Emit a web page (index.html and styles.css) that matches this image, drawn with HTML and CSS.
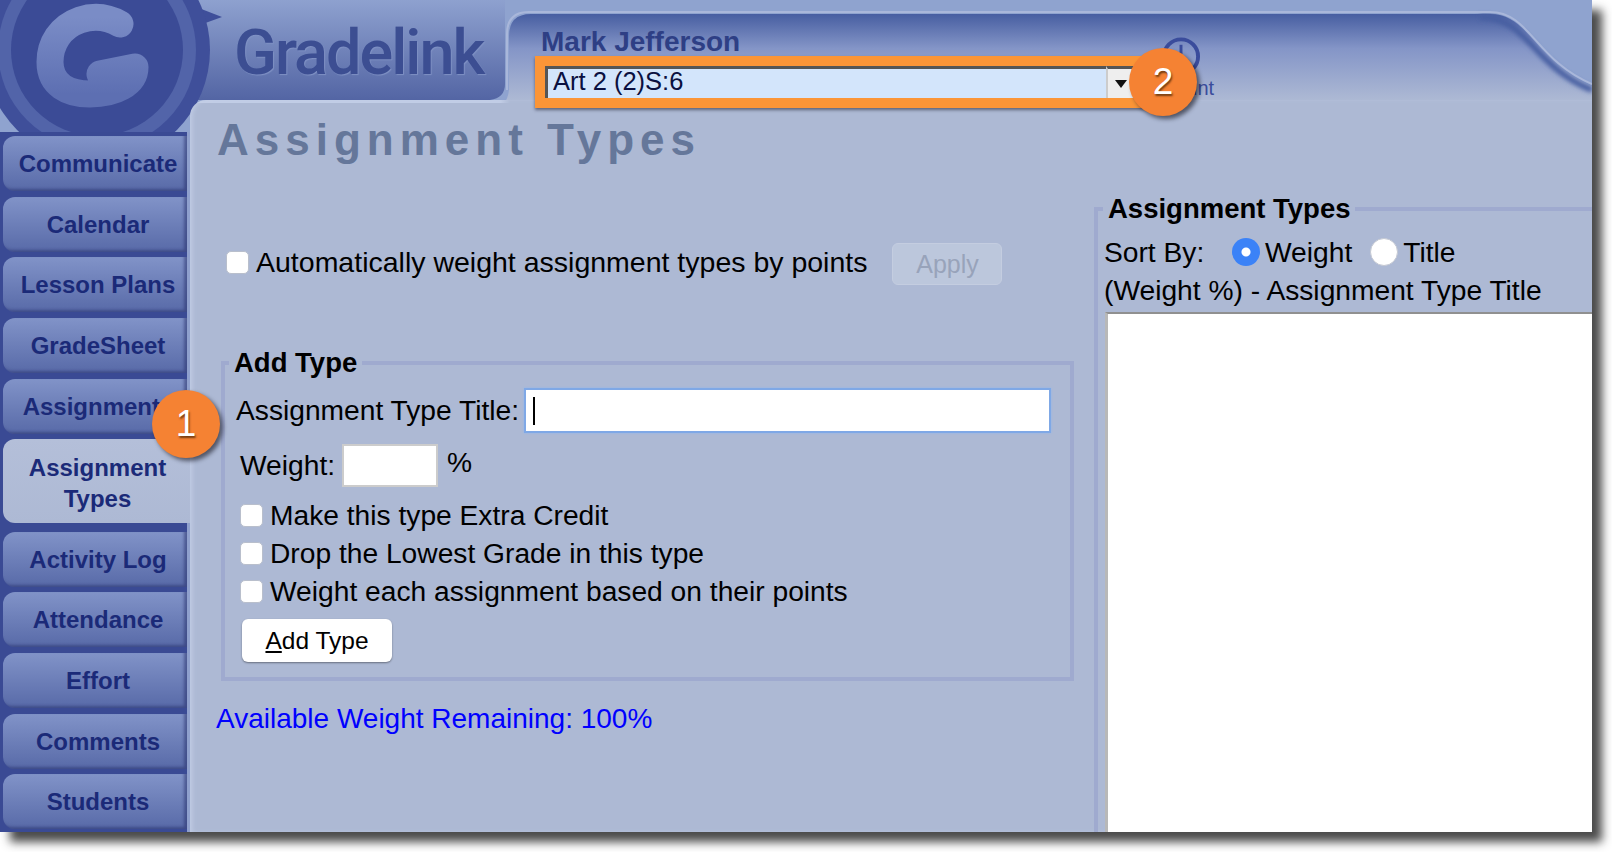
FILE: index.html
```html
<!DOCTYPE html>
<html lang="en">
<head>
  <meta charset="UTF-8">
  <title>Gradelink - Assignment Types</title>
  <link rel="stylesheet" href="styles.css">
</head>
<body>

  <div class="window">
    <svg class="header-art" width="1592" height="140" viewBox="0 0 1592 140">
      <defs>
        <linearGradient id="brandTab" x1="0" y1="0" x2="0" y2="1">
          <stop offset="0" stop-color="#8ea1cf"/>
          <stop offset="1" stop-color="#5365a4"/>
        </linearGradient>
        <linearGradient id="userTab" gradientUnits="userSpaceOnUse" x1="0" y1="14" x2="0" y2="100">
          <stop offset="0" stop-color="#475ea1"/>
          <stop offset="0.4" stop-color="#8495c7"/>
          <stop offset="1" stop-color="#adb9d4"/>
        </linearGradient>
        <linearGradient id="letterG" x1="0" y1="0" x2="0" y2="1">
          <stop offset="0" stop-color="#7a8cc6"/>
          <stop offset="1" stop-color="#5d6fb2"/>
        </linearGradient>
        <filter id="softEdge"><feGaussianBlur stdDeviation="2"/></filter>
      </defs>
      <rect width="1592" height="140" fill="#8fa3cf"/>
      <path d="M190 0H505V84Q505 98 490 100H190Z" fill="url(#brandTab)"/>
      <path d="M490 112Q507 108 509 90V36Q509 14 531 14H1490C1530 14 1535 62 1592 86V140H490Z" fill="url(#userTab)"/>
      <path d="M1480 17C1528 17 1532 66 1592 90" fill="none" stroke="#475ea1" stroke-width="6" filter="url(#softEdge)"/>
      <path d="M507 90V34Q507 12 529 12H1490C1530 12 1535 60 1592 84" fill="none" stroke="#a9b7da" stroke-width="2"/>
      <!-- logo -->
      <path d="M178 0L222 17L186 30Z" fill="#3f4f9a"/>
      <circle cx="97" cy="50" r="113" fill="#3f4f9a"/>
      <circle cx="97" cy="50" r="99" fill="#5264a9"/>
      <circle cx="97" cy="50" r="86" fill="#3b4b96"/>
      <path d="M120 24C106 16 92 16 80 20C60 27 50 44 50 62C50 85 68 94 90 94C115 94 135 84 135 67L100 74" fill="none" stroke="url(#letterG)" stroke-width="27" stroke-linecap="round" stroke-linejoin="round"/>
    </svg>

    <header class="top-bar">
      <div class="wordmark">Gradelink</div>
      <div class="user-box">
        <div class="user-name">Mark Jefferson</div>
        <div class="course-highlight">
          <select class="course-select">
            <option>Art 2 (2)S:6</option>
          </select>
          <div class="select-arrow"><span class="arrow-down"></span></div>
        </div>
      </div>
      <div class="account-link">
        <svg width="42" height="42" viewBox="0 0 42 42">
          <circle cx="21" cy="21" r="17.5" fill="none" stroke="#3a4c9c" stroke-width="4"/>
          <path d="M21 9V21" stroke="#3a4c9c" stroke-width="3"/>
        </svg>
        <span>Account</span>
      </div>
    </header>

    <div class="content">
      <nav class="sidebar">
        <a class="nav-item">Communicate</a>
        <a class="nav-item">Calendar</a>
        <a class="nav-item">Lesson Plans</a>
        <a class="nav-item">GradeSheet</a>
        <a class="nav-item">Assignments</a>
        <a class="nav-item active">Assignment Types</a>
        <a class="nav-item">Activity Log</a>
        <a class="nav-item">Attendance</a>
        <a class="nav-item">Effort</a>
        <a class="nav-item">Comments</a>
        <a class="nav-item">Students</a>
      </nav>

      <main class="panel">
        <h1>Assignment Types</h1>

        <div class="columns">
          <div class="left-col">
            <div class="auto-row">
              <input type="checkbox" id="autoWeight">
              <label for="autoWeight">Automatically weight assignment types by points</label>
              <button type="button" class="apply-btn" disabled>Apply</button>
            </div>

            <fieldset class="add-type">
              <legend>Add Type</legend>
              <div class="title-row">
                <label for="typeTitle">Assignment Type Title:</label>
                <div class="title-input">
                  <span class="caret"></span>
                  <input type="text" id="typeTitle">
                </div>
              </div>
              <div class="weight-row">
                <label for="typeWeight">Weight:</label>
                <input type="text" id="typeWeight">
                <span class="percent">%</span>
              </div>
              <div class="check-row">
                <input type="checkbox" id="extraCredit">
                <label for="extraCredit">Make this type Extra Credit</label>
              </div>
              <div class="check-row">
                <input type="checkbox" id="dropLowest">
                <label for="dropLowest">Drop the Lowest Grade in this type</label>
              </div>
              <div class="check-row">
                <input type="checkbox" id="byPoints">
                <label for="byPoints">Weight each assignment based on their points</label>
              </div>
              <button type="button" class="add-btn"><u>A</u>dd Type</button>
            </fieldset>

            <p class="remaining">Available Weight Remaining: 100%</p>
          </div>

          <fieldset class="type-list">
            <legend>Assignment Types</legend>
            <div class="sort-row">
              <span class="sort-label">Sort By:</span>
              <input type="radio" name="sortBy" id="sortWeight" checked>
              <label for="sortWeight">Weight</label>
              <input type="radio" name="sortBy" id="sortTitle">
              <label for="sortTitle">Title</label>
            </div>
            <div class="list-caption">(Weight %) - Assignment Type Title</div>
            <div class="list-box"></div>
          </fieldset>
        </div>
      </main>
    </div>

    <div class="badge badge-one">1</div>
    <div class="badge badge-two">2</div>
  </div>

</body>
</html>
```

FILE: styles.css
```css
html, body {
  margin: 0;
  height: 100%;
  overflow: hidden;
  background-color: white;
}

body {
  font-family: "Liberation Sans", Arial, sans-serif;
  color: black;
}

.window {
  position: relative;
  width: 1592px;
  height: 832px;
  overflow: visible;
  box-shadow: 10px 10px 9px rgba(30, 30, 30, 0.8);
}

.header-art {
  position: absolute;
  left: 0;
  top: 0;
}

/* top bar */
.top-bar {
  position: relative;
  z-index: 2;
  display: flex;
  height: 100px;
}

.wordmark {
  width: 301px;
  padding: 13px 0 0 234px;
  box-sizing: content-box;
  font-family: Roboto, sans-serif;
  font-size: 63px;
  font-weight: 500;
  letter-spacing: -2px;
  line-height: 80px;
  color: #3c4e92;
  text-shadow: 1px 1px 1px #7f91c4;
}

.user-box {
  width: 615px;
  padding-top: 27px;
}

.user-name {
  padding-left: 6px;
  height: 29px;
  font-size: 28px;
  font-weight: bold;
  line-height: 30px;
  color: #2e3f85;
}

.course-highlight {
  display: flex;
  height: 32px;
  border: 10px solid #fb9537;
  box-shadow: 0 2px 3px rgba(40, 40, 60, 0.6);
}

.course-select {
  appearance: none;
  flex: 1;
  min-width: 0;
  margin: 0;
  padding: 0 0 3px 8px;
  border: none;
  border-radius: 0;
  background-color: #d3e5fb;
  box-shadow: inset 3px 3px 0 #555;
  font-family: inherit;
  font-size: 25.5px;
  color: #0a1040;
}

.select-arrow {
  display: flex;
  box-sizing: border-box;
  width: 34px;
  padding-left: 7px;
  align-items: center;
  background-color: #eee;
  border-top: 3px solid #555;
  border-left: 2px solid #ccc;
}

.arrow-down {
  width: 0;
  height: 0;
  border-left: 6px solid transparent;
  border-right: 6px solid transparent;
  border-top: 8px solid #111;
}

.account-link {
  display: flex;
  flex-direction: column;
  align-items: center;
  width: 64px;
  margin-left: -4px;
  padding-top: 36px;
  font-size: 20px;
  line-height: 23px;
  color: #3a4c9c;
}

.account-link svg {
  display: block;
  margin-left: 5px;
}

/* sidebar + panel */
.content {
  position: relative;
  z-index: 1;
  display: flex;
  height: 732px;
}

.sidebar {
  box-sizing: border-box;
  width: 190px;
  height: 700px;
  margin-top: 32px;
  padding: 4px 0 0 3px;
  display: flex;
  flex-direction: column;
  gap: 5.7px;
  background-color: #3a4a94;
  border-right: 3px solid #8fa0cd;
}

.nav-item {
  display: flex;
  align-items: center;
  justify-content: center;
  box-sizing: border-box;
  height: 55px;
  padding: 0 0 0 6px;
  text-align: center;
  font-size: 24px;
  font-weight: bold;
  line-height: 31px;
  color: #1b2a78;
  border-radius: 12px 0 0 12px;
  background: linear-gradient(#8193c8, #586aa8);
  box-shadow: inset -3px -2px 3px rgba(40, 50, 110, 0.55);
}

.nav-item.active {
  height: 83.5px;
  margin-right: -3px;
  margin-bottom: 3px;
  background: linear-gradient(#b4bfd9, #adb9d4);
  box-shadow: none;
  padding: 3px 20px 0 22px;
}

.panel {
  flex: 1;
  min-width: 0;
  background: linear-gradient(to right, #c2cde6 310px, transparent 320px) top / 100% 3px no-repeat, #adb9d4;
  border-top-left-radius: 16px;
  box-shadow: inset 4px 0 5px -2px #c2cde6;
  overflow: hidden;
}

.panel h1 {
  margin: 14px 0 0 27px;
  height: 52px;
  font-size: 44px;
  font-weight: bold;
  letter-spacing: 6px;
  line-height: 52px;
  color: #65779a;
}

.columns {
  display: flex;
  height: 666px;
}

.left-col {
  width: 904px;
  flex: none;
}

.auto-row {
  display: flex;
  align-items: center;
  height: 42px;
  margin: 77px 0 0 36px;
  font-size: 28.5px;
}

.auto-row label {
  margin-left: 7px;
}

.auto-row input,
.auto-row label {
  margin-bottom: 4px;
}

input[type="checkbox"] {
  appearance: none;
  flex: none;
  box-sizing: border-box;
  width: 23px;
  height: 23px;
  background-color: white;
  border: 1px solid #b9bfcc;
  border-radius: 5px;
  margin-top: 0;
  margin-left: 0;
  margin-right: 0;
}

.apply-btn {
  width: 110px;
  height: 42px;
  margin-left: 25px;
  padding: 0;
  border: 1px solid #c4cde0;
  border-radius: 6px;
  background-color: #bcc7dc;
  font-family: inherit;
  font-size: 25px;
  color: #98a3ba;
}

.add-type {
  box-sizing: border-box;
  width: 853px;
  height: 333px;
  margin: 63px 0 0 31px;
  padding: 10px 0 0 11px;
  border: 4px solid #9faacf;
  font-size: 28.2px;
  min-width: 0;
}

.add-type legend {
  margin-left: -7px;
  padding: 0 5px;
  font-weight: bold;
  font-size: 27.5px;
  line-height: 30px;
}

.title-row {
  display: flex;
  align-items: center;
  height: 45px;
}

.title-input {
  display: flex;
  align-items: center;
  box-sizing: border-box;
  width: 527px;
  height: 45px;
  margin-left: 5px;
  padding-left: 7px;
  background-color: white;
  border: 2px solid #7fa8e6;
  box-shadow: 0 0 2px #8fb8f0;
}

.caret {
  flex: none;
  width: 2px;
  height: 28px;
  background-color: black;
}

.title-input input {
  flex: 1;
  min-width: 0;
  border: none;
  background: none;
  padding: 0;
  outline: none;
}

.weight-row {
  display: flex;
  align-items: center;
  height: 43px;
  margin: 11px 0 9px 4px;
}

#typeWeight {
  box-sizing: border-box;
  width: 96px;
  height: 43px;
  margin: 0 0 0 7px;
  background-color: white;
  border: 2px solid #ccc;
}

.percent {
  margin: -6px 0 0 9px;
}

.check-row {
  display: flex;
  align-items: center;
  gap: 7px;
  height: 38px;
  margin-left: 4px;
}

.check-row input {
  margin-bottom: 0;
}

.add-btn {
  display: block;
  box-sizing: border-box;
  width: 150px;
  height: 43px;
  margin: 9px 0 0 6px;
  padding: 0;
  border: none;
  border-radius: 6px;
  background-color: white;
  box-shadow: 0 1px 2px rgba(0, 0, 0, 0.4);
  font-family: inherit;
  font-size: 24.5px;
  color: black;
}

.remaining {
  margin: 21px 0 0 26px;
  font-size: 28px;
  line-height: 34px;
  color: #0000ff;
}

.type-list {
  flex: 1;
  min-width: 0;
  box-sizing: border-box;
  margin: 28px 0 0 0;
  padding: 0 0 0 6px;
  border: none;
  border-top: 4px solid #9faacf;
  border-left: 4px solid #9faacf;
  display: flex;
  flex-direction: column;
  font-size: 28.2px;
}

.type-list legend {
  margin-left: -1px;
  padding: 0 5px;
  font-size: 27.5px;
  font-weight: bold;
  line-height: 30px;
}

.sort-row {
  display: flex;
  align-items: center;
  height: 38px;
  margin-top: 9px;
}

.sort-label {
  width: 128px;
}

input[type="radio"] {
  appearance: none;
  flex: none;
  box-sizing: border-box;
  width: 28px;
  height: 28px;
  margin: 0;
  background-color: white;
  border: 1px solid #c4c8d2;
  border-radius: 50%;
}

input[type="radio"]:checked {
  border: none;
  background: radial-gradient(circle, white 0 4px, #3b82f7 5px);
}

.sort-row label {
  margin: 0 18px 0 5px;
}

.sort-row label:last-child {
  margin-right: 0;
}

.list-caption {
  height: 40px;
  margin-top: 1px;
  line-height: 36px;
}

.list-box {
  flex: 1;
  margin-left: 1px;
  background-color: white;
  border-top: 2px solid #909090;
  border-left: 3px solid #b8b8b8;
}

/* numbered callouts */
.badge {
  position: absolute;
  z-index: 5;
  display: flex;
  align-items: center;
  justify-content: center;
  width: 68px;
  height: 68px;
  border-radius: 50%;
  background-color: #f58233;
  color: white;
  font-size: 37px;
  box-shadow: 3px 3px 4px rgba(20, 20, 30, 0.6);
  text-shadow: 1px 2px 2px rgba(60, 30, 0, 0.7);
}

.badge-one {
  left: 152px;
  top: 390px;
}

.badge-two {
  left: 1129px;
  top: 48px;
}
```
